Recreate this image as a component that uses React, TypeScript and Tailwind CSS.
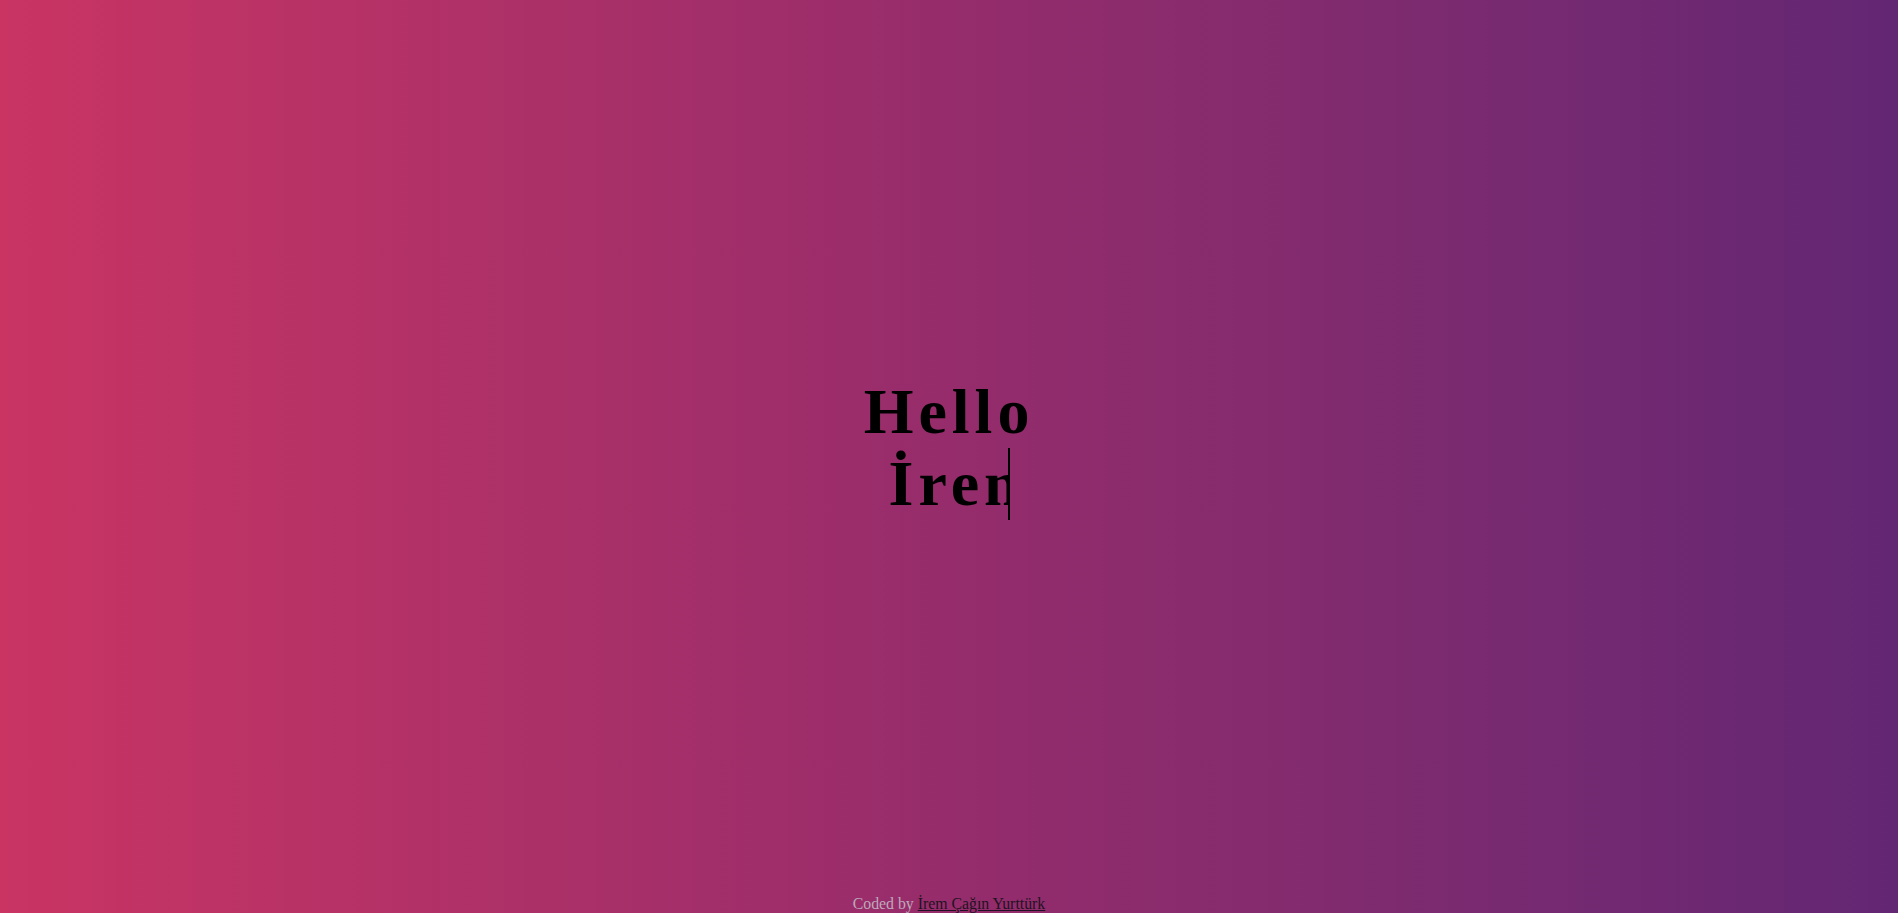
export default function App() {
  return (
    <div className="flex h-[913px] w-full flex-col overflow-hidden bg-gradient-to-r from-[#c93463] via-[#962c6b] to-[#632673] font-['Liberation_Serif','Times_New_Roman',serif]">
      {/* greeting */}
      <main className="flex flex-1 items-center justify-center">
        <div className="text-center text-[64px] font-bold leading-[72px] tracking-[5px] text-black">
          <div>Hello</div>
          <div>
            <span className="inline-block w-[121px] overflow-hidden whitespace-nowrap border-r-2 border-black align-top">
              İrem
            </span>
          </div>
        </div>
      </main>
      <footer className="text-center text-[15.8px] leading-[18px] text-[#bcaabb]">
        Coded by{' '}
        <a href="#" className="text-[#1d1322] underline">
          İrem Çağın Yurttürk
        </a>
      </footer>
    </div>
  );
}
